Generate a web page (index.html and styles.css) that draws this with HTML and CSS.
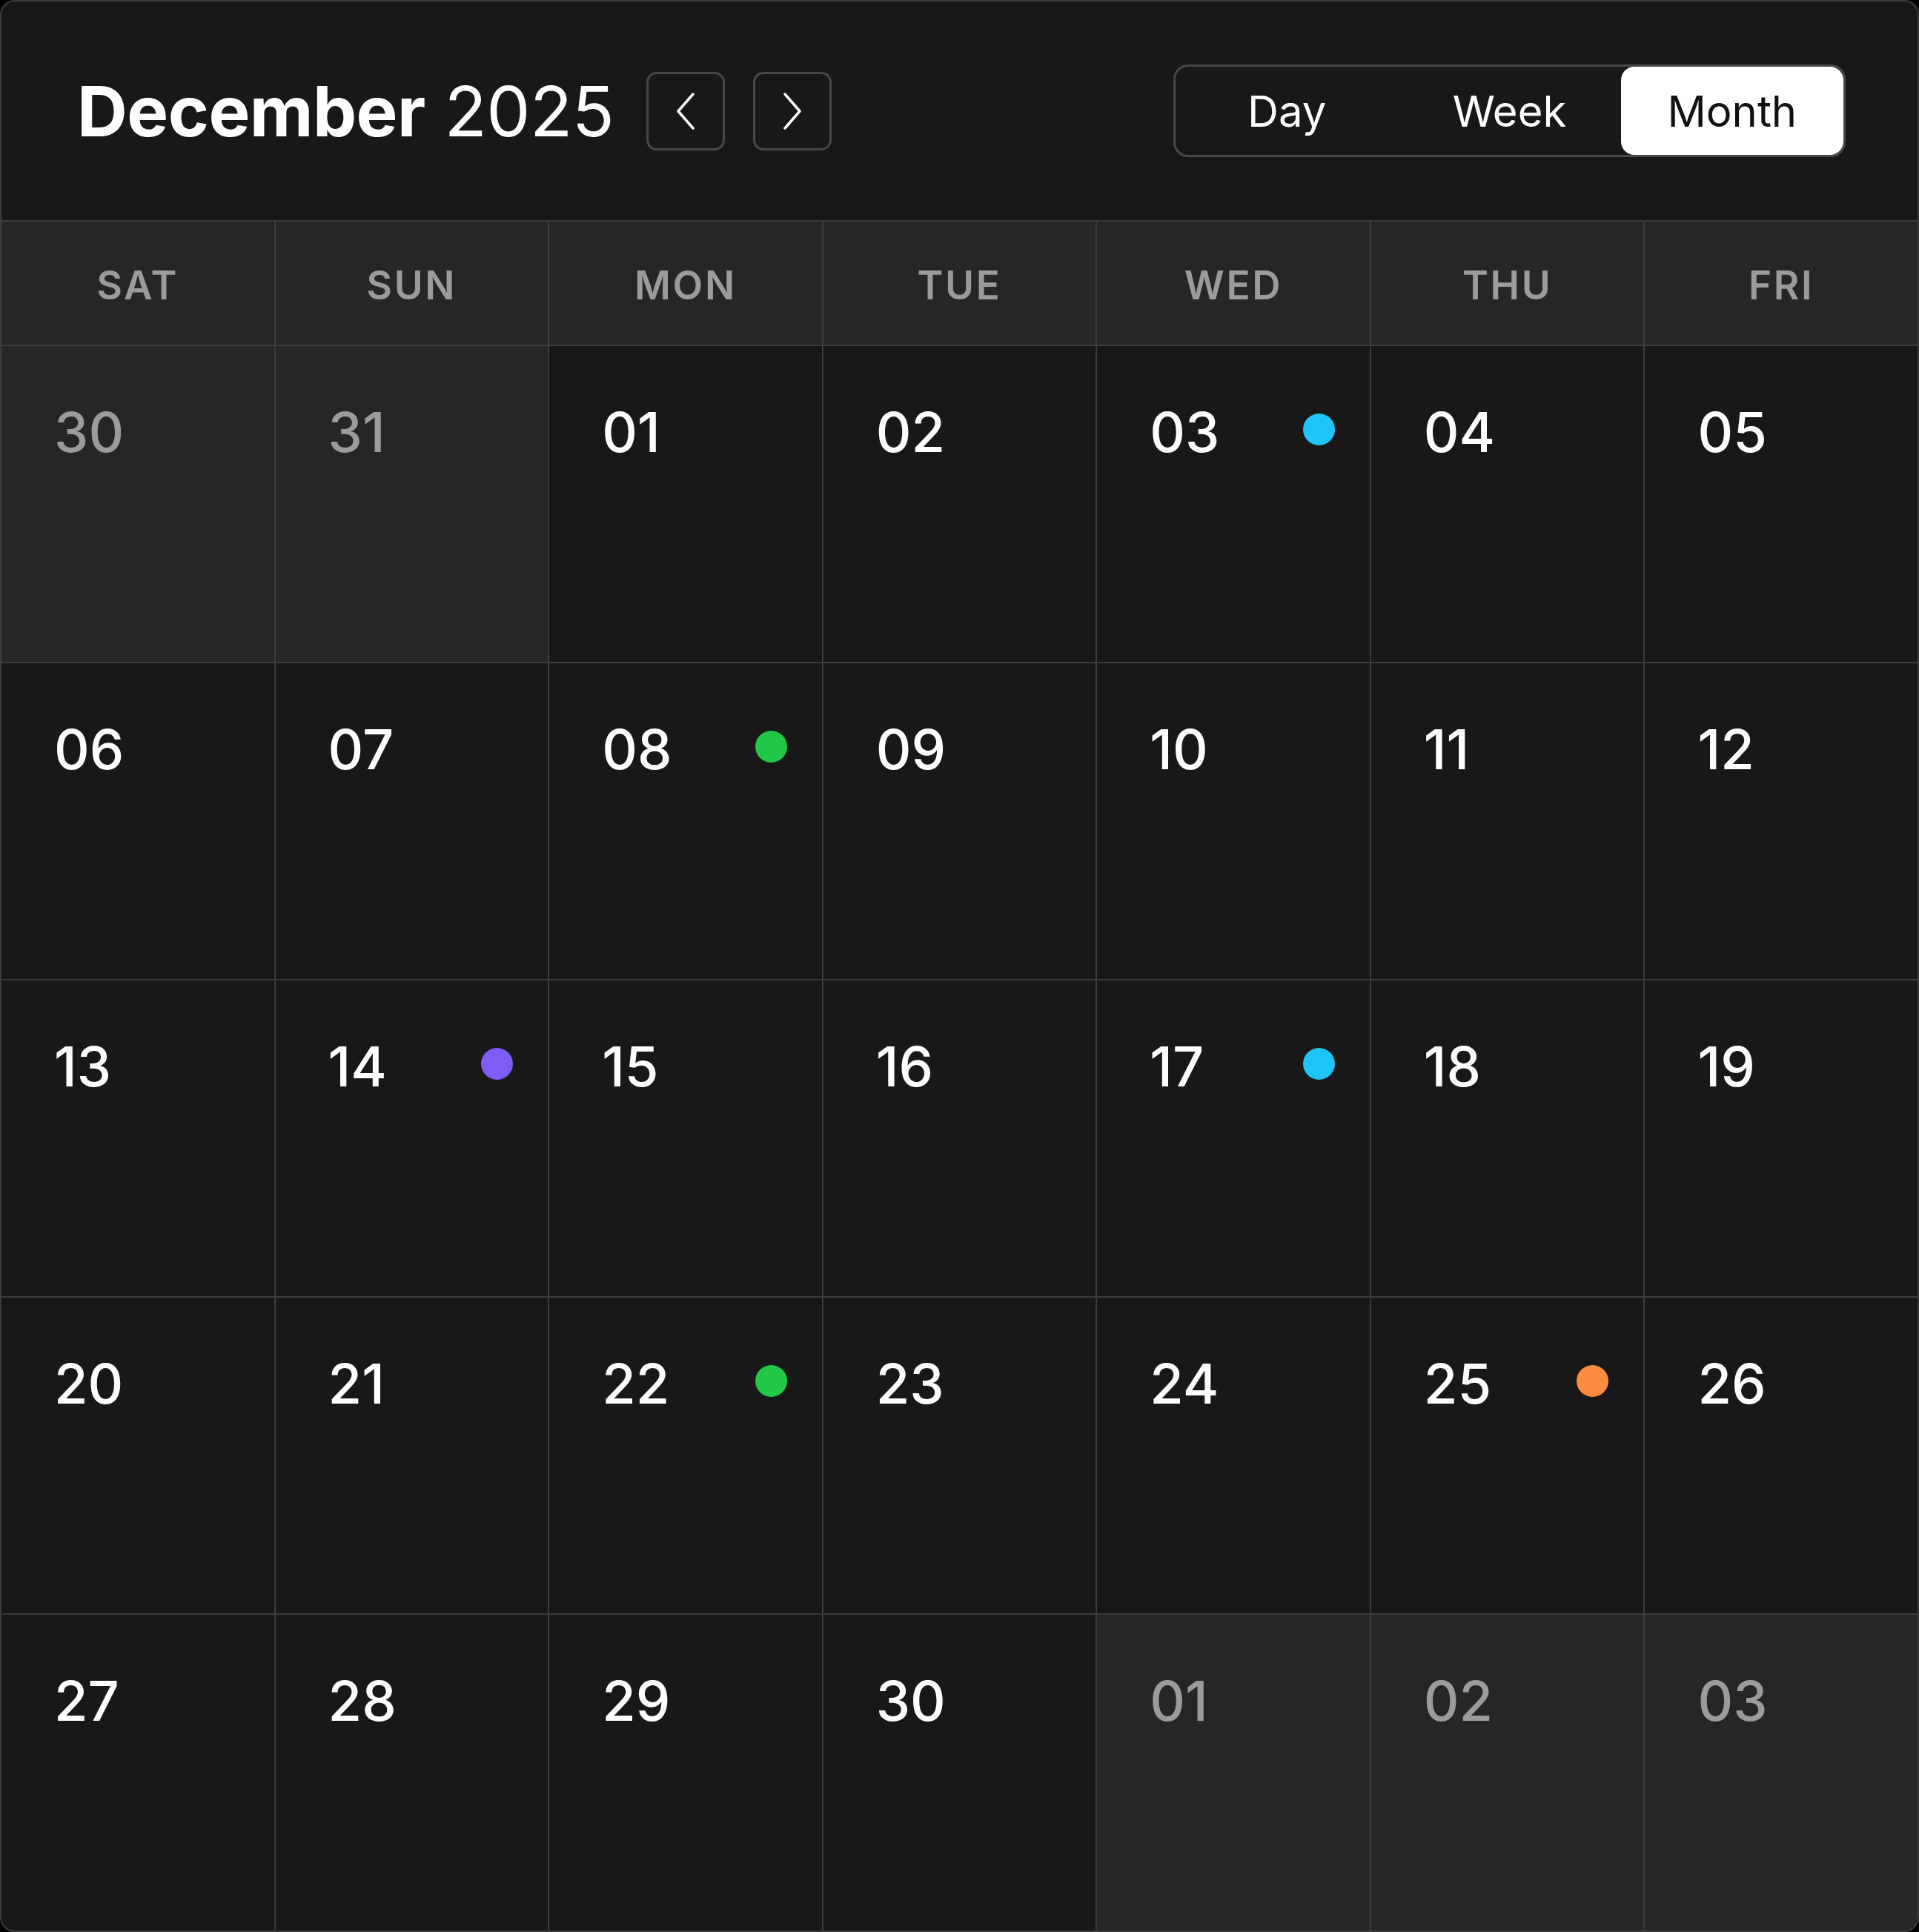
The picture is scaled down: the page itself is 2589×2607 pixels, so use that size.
FILE: index.html
```html
<!DOCTYPE html>
<html lang="en">
<head>
<meta charset="utf-8">
<title>December 2025</title>
<link rel="stylesheet" href="styles.css">
</head>
<body>
<div class="calendar">
  <header class="cal-header">
    <div class="title-group">
      <h1 class="title"><strong>December</strong> 2025</h1>
      <button class="nav-btn" aria-label="Previous month">
        <svg viewBox="0 0 28 50" width="28" height="50"><polyline points="24,2 4,25 24,48" /></svg>
      </button>
      <button class="nav-btn" aria-label="Next month">
        <svg viewBox="0 0 28 50" width="28" height="50"><polyline points="4,2 24,25 4,48" /></svg>
      </button>
    </div>
    <div class="segmented">
      <button class="seg">Day</button>
      <button class="seg">Week</button>
      <button class="seg active">Month</button>
    </div>
  </header>
  <div class="grid">
    <div class="wd">SAT</div>
    <div class="wd">SUN</div>
    <div class="wd">MON</div>
    <div class="wd">TUE</div>
    <div class="wd">WED</div>
    <div class="wd">THU</div>
    <div class="wd">FRI</div>

    <div class="day muted"><span class="num">30</span></div>
    <div class="day muted"><span class="num">31</span></div>
    <div class="day"><span class="num">01</span></div>
    <div class="day"><span class="num">02</span></div>
    <div class="day"><span class="num">03</span><span class="dot cyan"></span></div>
    <div class="day"><span class="num">04</span></div>
    <div class="day"><span class="num">05</span></div>

    <div class="day"><span class="num">06</span></div>
    <div class="day"><span class="num">07</span></div>
    <div class="day"><span class="num">08</span><span class="dot green"></span></div>
    <div class="day"><span class="num">09</span></div>
    <div class="day"><span class="num">10</span></div>
    <div class="day"><span class="num">11</span></div>
    <div class="day"><span class="num">12</span></div>

    <div class="day"><span class="num">13</span></div>
    <div class="day"><span class="num">14</span><span class="dot purple"></span></div>
    <div class="day"><span class="num">15</span></div>
    <div class="day"><span class="num">16</span></div>
    <div class="day"><span class="num">17</span><span class="dot cyan"></span></div>
    <div class="day"><span class="num">18</span></div>
    <div class="day"><span class="num">19</span></div>

    <div class="day"><span class="num">20</span></div>
    <div class="day"><span class="num">21</span></div>
    <div class="day"><span class="num">22</span><span class="dot green"></span></div>
    <div class="day"><span class="num">23</span></div>
    <div class="day"><span class="num">24</span></div>
    <div class="day"><span class="num">25</span><span class="dot orange"></span></div>
    <div class="day"><span class="num">26</span></div>

    <div class="day"><span class="num">27</span></div>
    <div class="day"><span class="num">28</span></div>
    <div class="day"><span class="num">29</span></div>
    <div class="day"><span class="num">30</span></div>
    <div class="day muted"><span class="num">01</span></div>
    <div class="day muted"><span class="num">02</span></div>
    <div class="day muted"><span class="num">03</span></div>
  </div>
</div>
</body>
</html>
```

FILE: styles.css
```css
* { box-sizing: border-box; }

html, body {
  margin: 0;
  padding: 0;
  background: #000;
}

body {
  font-family: Inter, "Liberation Sans", sans-serif;
  color: #fff;
}

.calendar {
  width: 2589px;
  height: 2607px;
  background: #181818;
  border: 2px solid #3c3c3e;
  border-radius: 20px;
  overflow: hidden;
  display: flex;
  flex-direction: column;
}

.cal-header {
  height: 297px;
  flex: none;
  border-bottom: 2px solid #3c3c3e;
  display: flex;
  align-items: center;
  justify-content: space-between;
  padding: 0 97px 0 102px;
}

.title-group {
  display: flex;
  align-items: center;
}

.title {
  margin: 0 44px 0 0;
  font-size: 94px;
  font-weight: 400;
  line-height: 1;
  letter-spacing: -0.6px;
  color: #fff;
}

.title strong { font-weight: 700; }

.nav-btn {
  width: 106px;
  height: 106px;
  margin-right: 38px;
  background: transparent;
  border: 3px solid #47474a;
  border-radius: 14px;
  display: flex;
  align-items: center;
  justify-content: center;
  padding: 0;
}

.nav-btn:last-child { margin-right: 0; }

.nav-btn svg {
  display: block;
  fill: none;
  stroke: #fff;
  stroke-width: 3.5;
  stroke-linecap: round;
  stroke-linejoin: round;
}

.segmented {
  width: 907px;
  height: 125px;
  border: 3px solid #47474a;
  border-radius: 20px;
  display: flex;
}

.seg {
  flex: 1;
  background: transparent;
  border: 0;
  color: #fff;
  font-family: Inter, "Liberation Sans", sans-serif;
  font-size: 58px;
  font-weight: 400;
  padding: 0;
  border-radius: 18px;
}

.seg.active {
  background: #fff;
  color: #111;
}

.grid {
  flex: 1;
  display: grid;
  grid-template-columns: repeat(7, 1fr);
  grid-template-rows: 166px repeat(5, 1fr);
  gap: 2px;
  background: #3c3c3e;
}

.wd {
  background: #262628;
  color: #9b9b9d;
  font-size: 53px;
  font-weight: 600;
  letter-spacing: 0.05em;
  display: flex;
  align-items: center;
  justify-content: center;
  padding-top: 6px;
}

.day {
  background: #181818;
  display: flex;
  align-items: flex-start;
  justify-content: space-between;
  padding: 79px 47px 0 71px;
}

.day.muted { background: #262628; }

.num {
  font-size: 74px;
  font-weight: 500;
  line-height: 74px;
  color: #fff;
}

.muted .num { color: #9b9b9d; }

.dot {
  width: 43px;
  height: 43px;
  border-radius: 50%;
  margin-top: 12px;
}

.dot.cyan { background: #20c5f7; }
.dot.green { background: #22c84a; }
.dot.purple { background: #7f5cf5; }
.dot.orange { background: #fb8b3d; }
```
